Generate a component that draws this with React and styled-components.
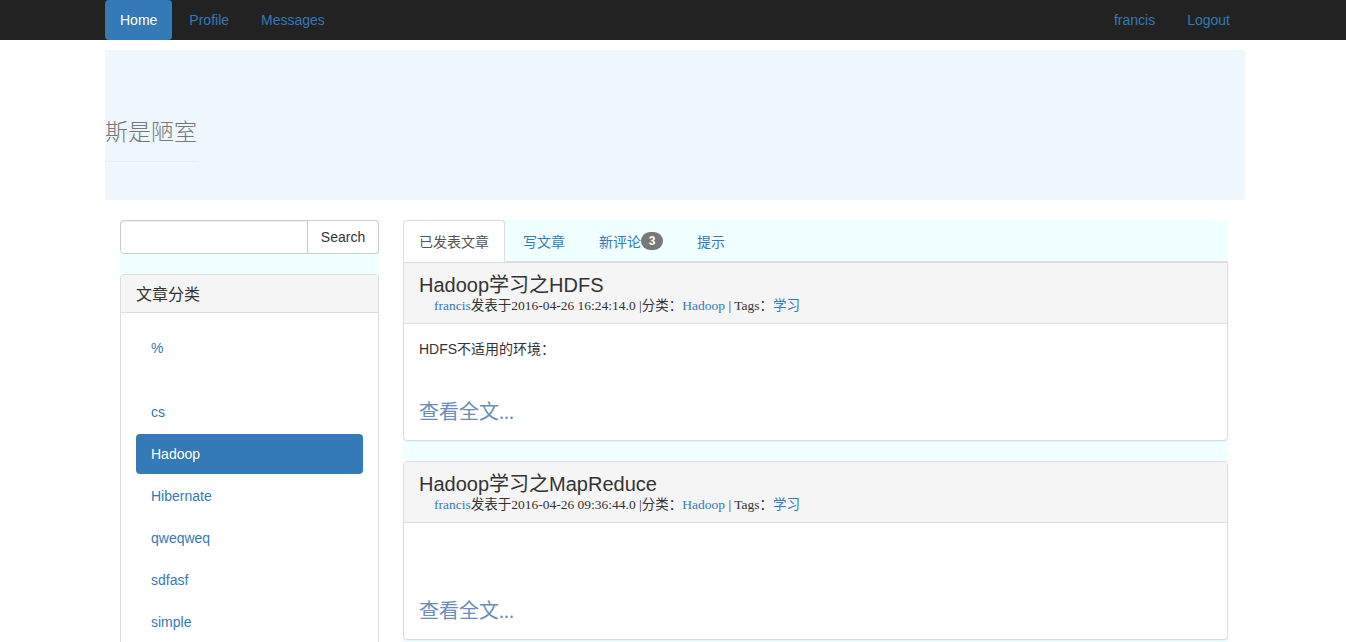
import React from 'react'
import styled, { createGlobalStyle } from 'styled-components'

const GlobalStyle = createGlobalStyle`
    html, body {
        margin: 0;
        padding: 0;
        background: #fff;
    }
    body {
        font-family: "Liberation Sans", Arial, "Noto Sans CJK SC", sans-serif;
        font-size: 14px;
        line-height: 1.42857;
        color: #333;
    }
    a {
        color: #337ab7;
        text-decoration: none;
    }
`

const NavBar = styled.nav`
    background: #222;
    height: 40px;
`
const NavInner = styled.div`
    width: 1140px;
    margin-left: 105px;
    display: flex;
    justify-content: space-between;
`
const NavGroup = styled.div`
    display: flex;
    gap: 2px;
`
const NavLink = styled.a`
    display: block;
    padding: 10px 15px;
    line-height: 20px;
    font-size: 14px;
    color: ${props => props.active ? '#fff' : '#337ab7'};
    background: ${props => props.active ? '#337ab7' : 'transparent'};
    border-radius: 4px;
`

const Container = styled.div`
    width: 1140px;
    margin-left: 105px;
`
const Jumbotron = styled.div`
    margin-top: 10px;
    height: 150px;
    background: #eef7fe;
    box-sizing: border-box;
    padding-top: 65px;
`
const SiteTitle = styled.h1`
    display: inline-block;
    margin: 0;
    padding: 0 1px 16px 0;
    border-bottom: 1px solid #e6eef6;
    font-family: "Noto Sans CJK SC", serif;
    font-weight: 300;
    font-size: 23px;
    line-height: 30px;
    color: #777;
`

const Row = styled.div`
    display: flex;
    margin-top: 20px;
    padding-left: 15px;
    gap: 24px;
`
const Sidebar = styled.aside`
    width: 259px;
    flex-shrink: 0;
    background: #f0ffff;
`
const SearchGroup = styled.form`
    display: flex;
    height: 34px;
    margin-bottom: 20px;
`
const SearchInput = styled.input`
    flex: 1;
    min-width: 0;
    box-sizing: border-box;
    height: 34px;
    border: 1px solid #ccc;
    border-radius: 4px 0 0 4px;
    box-shadow: inset 0 1px 1px rgba(0,0,0,.075);
    background: #fff;
    outline: none;
`
const SearchButton = styled.button`
    width: 71px;
    height: 34px;
    box-sizing: border-box;
    border: 1px solid #ccc;
    border-left: 0;
    border-radius: 0 4px 4px 0;
    background: #fff;
    color: #333;
    font-family: "Liberation Sans", Arial, sans-serif;
    font-size: 14px;
    padding: 0;
`
const Panel = styled.div`
    background: #fff;
    border: 1px solid #ddd;
    border-radius: ${props => props.flatTop ? '0 0 4px 4px' : '4px'};
    box-shadow: 0 1px 1px rgba(0,0,0,.05);
    margin-bottom: ${props => props.gap || '0'};
`
const PanelHeading = styled.div`
    background: #f5f5f5;
    border-bottom: 1px solid #ddd;
    padding: 10px 15px;
    border-radius: 3px 3px 0 0;
`
const PanelTitle = styled.h3`
    margin: 0;
    font-family: "Noto Sans CJK SC", sans-serif;
    font-weight: 400;
    font-size: 16px;
    line-height: 17px;
    color: #333;
`
const PanelBody = styled.div`
    padding: 15px;
`
const Pills = styled.ul`
    list-style: none;
    margin: 0;
    padding: 0;
`
const Pill = styled.li`
    & + & {
        margin-top: 2px;
    }
    a {
        display: block;
        padding: 10px 15px;
        line-height: 20px;
        border-radius: 4px;
        color: ${props => props.active ? '#fff' : '#337ab7'};
        background: ${props => props.active ? '#337ab7' : 'transparent'};
    }
`

const Main = styled.main`
    width: 825px;
    flex-shrink: 0;
    background: #f0ffff;
`
const Tabs = styled.ul`
    list-style: none;
    margin: 0;
    padding: 0;
    display: flex;
    border-bottom: 1px solid #ddd;
`
const Tab = styled.li`
    margin-right: 2px;
    margin-bottom: -1px;
    a {
        display: flex;
        align-items: center;
        padding: 10px 15px;
        line-height: 20px;
        border: 1px solid ${props => props.active ? '#ddd' : 'transparent'};
        border-bottom-color: ${props => props.active ? '#fff' : 'transparent'};
        border-radius: 4px 4px 0 0;
        background: ${props => props.active ? '#fff' : 'transparent'};
        color: ${props => props.active ? '#555' : '#337ab7'};
        font-family: "Noto Sans CJK SC", sans-serif;
        font-size: 14px;
    }
`
const Badge = styled.span`
    display: inline-block;
    min-width: 10px;
    padding: 3px 6px;
    font-family: "Liberation Sans", Arial, sans-serif;
    font-size: 12px;
    font-weight: 700;
    line-height: 1;
    color: #fff;
    background: #777;
    border-radius: 10px;
    text-align: center;
`
const ArticleHeading = styled.div`
    background: #f5f5f5;
    border-bottom: 1px solid #ddd;
    padding: 10px 15px 9px;
`
const ArticleTitle = styled.h2`
    margin: 0;
    font-family: "Liberation Sans", Arial, "Noto Sans CJK SC", sans-serif;
    font-weight: 400;
    font-size: 20px;
    line-height: 24px;
    color: #333;
`
const Meta = styled.div`
    padding-left: 15px;
    font-family: "Liberation Serif", Georgia, "Noto Sans CJK SC", serif;
    font-size: 13.5px;
    line-height: 17px;
    color: #333;
`
const ArticleBody = styled.div`
    padding: 15px 15px 15px;
`
const Summary = styled.p`
    margin: 0;
    min-height: 20px;
    line-height: 20px;
    font-family: "Liberation Sans", Arial, "Noto Sans CJK SC", sans-serif;
`
const ReadMore = styled.a`
    display: block;
    margin-top: 40px;
    font-family: "Liberation Serif", "Noto Sans CJK SC", serif;
    font-size: 20px;
    line-height: 26px;
    color: #6a8dbb;
`

const categories = ['%', '', 'cs', 'Hadoop', 'Hibernate', 'qweqweq', 'sdfasf', 'simple']

const articles = [
    { title: 'Hadoop学习之HDFS', time: '2016-04-26 16:24:14.0', summary: 'HDFS不适用的环境：' },
    { title: 'Hadoop学习之MapReduce', time: '2016-04-26 09:36:44.0', summary: '' },
]

function Article({ data, first }) {
    return (
        <Panel flatTop={first} gap="20px">
            <ArticleHeading>
                <ArticleTitle>{data.title}</ArticleTitle>
                <Meta>
                    <a href="#">francis</a>发表于{data.time} |分类：<a href="#">Hadoop</a> | Tags：<a href="#">学习</a>
                </Meta>
            </ArticleHeading>
            <ArticleBody>
                <Summary>{data.summary}</Summary>
                <ReadMore href="#">查看全文...</ReadMore>
            </ArticleBody>
        </Panel>
    )
}

export default function App() {
    return (
        <>
            <GlobalStyle />
            <NavBar>
                <NavInner>
                    <NavGroup>
                        <NavLink active href="#">Home</NavLink>
                        <NavLink href="#">Profile</NavLink>
                        <NavLink href="#">Messages</NavLink>
                    </NavGroup>
                    <NavGroup>
                        <NavLink href="#">francis</NavLink>
                        <NavLink href="#">Logout</NavLink>
                    </NavGroup>
                </NavInner>
            </NavBar>
            <Container>
                <Jumbotron>
                    <SiteTitle>斯是陋室</SiteTitle>
                </Jumbotron>
                <Row>
                    <Sidebar>
                        <SearchGroup onSubmit={e => e.preventDefault()}>
                            <SearchInput type="text" />
                            <SearchButton type="submit">Search</SearchButton>
                        </SearchGroup>
                        <Panel>
                            <PanelHeading>
                                <PanelTitle>文章分类</PanelTitle>
                            </PanelHeading>
                            <PanelBody>
                                <Pills>
                                    {categories.map((c, i) => (
                                        <Pill key={i} active={c === 'Hadoop'}>
                                            <a href="#">{c}</a>
                                        </Pill>
                                    ))}
                                </Pills>
                            </PanelBody>
                        </Panel>
                    </Sidebar>
                    <Main>
                        <Tabs>
                            <Tab active><a href="#">已发表文章</a></Tab>
                            <Tab><a href="#">写文章</a></Tab>
                            <Tab><a href="#">新评论<Badge>3</Badge></a></Tab>
                            <Tab><a href="#">提示</a></Tab>
                        </Tabs>
                        {articles.map((a, i) => (
                            <Article key={i} data={a} first={i === 0} />
                        ))}
                    </Main>
                </Row>
            </Container>
        </>
    )
}
